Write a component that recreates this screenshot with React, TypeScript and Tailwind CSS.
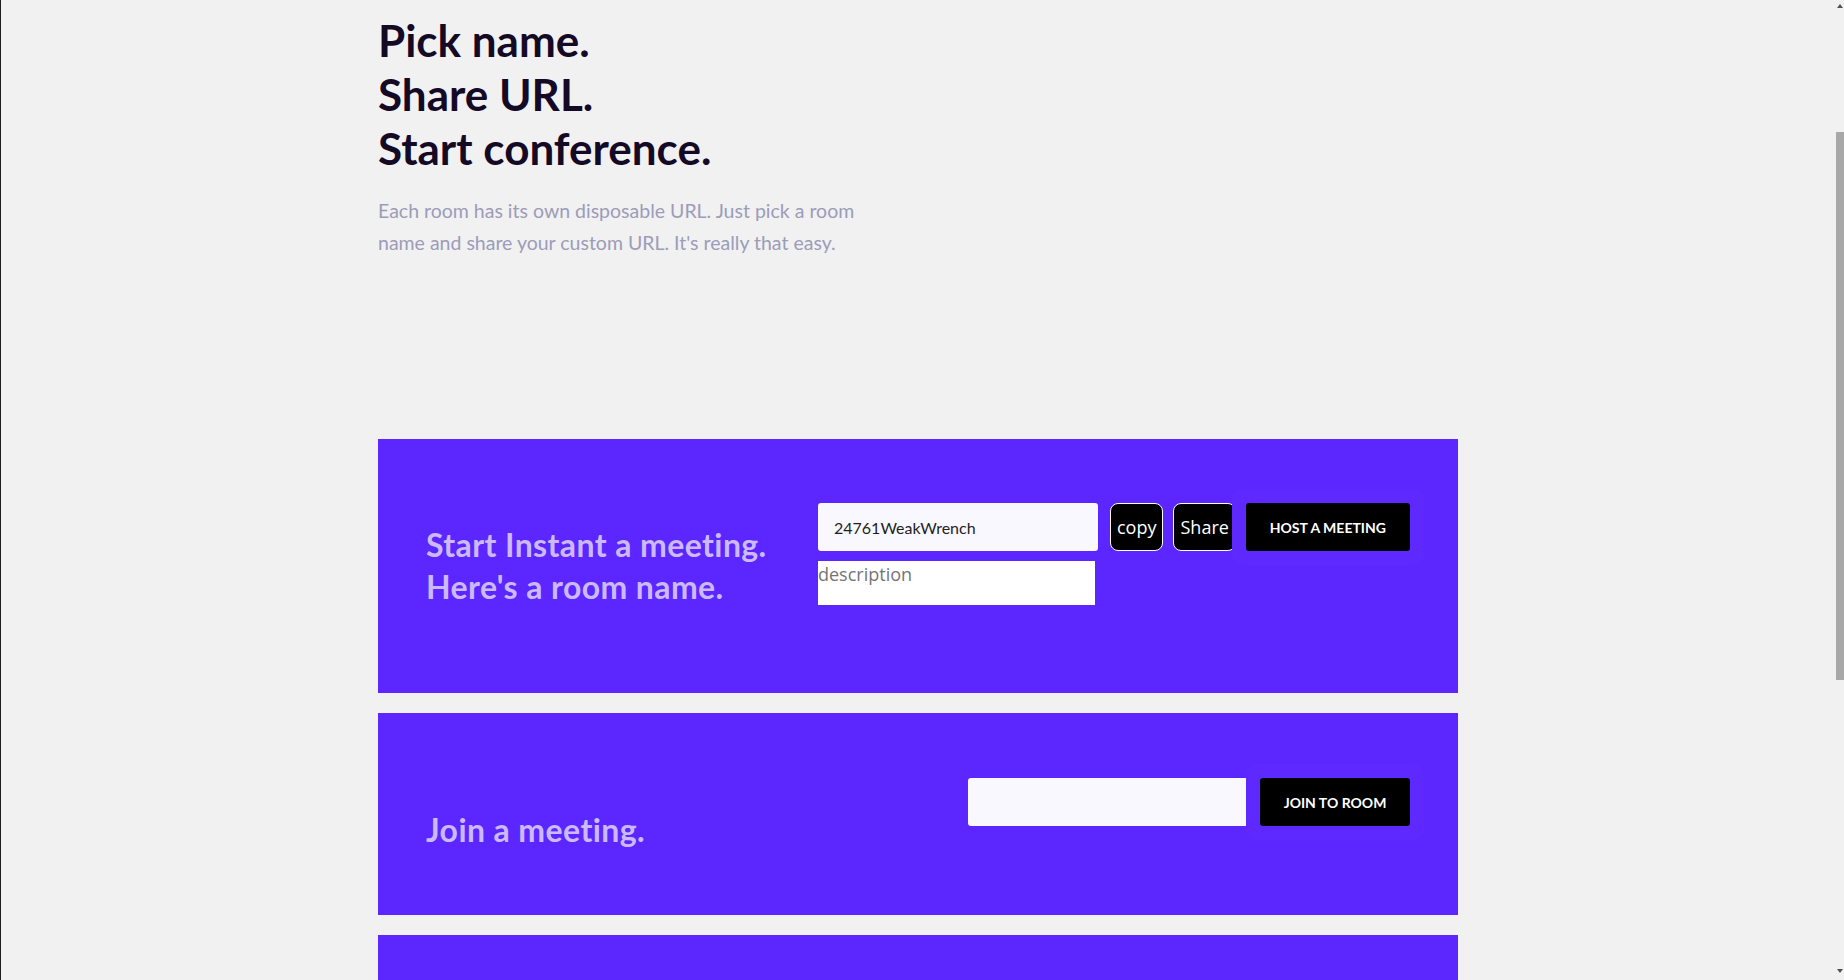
const lato = { fontFamily: '"Lato", "Liberation Sans", sans-serif' };
const openSans = { fontFamily: '"Open Sans", "Noto Sans", sans-serif' };

function Scrollbar() {
  return (
    <div className="flex w-[8px] flex-col items-center bg-[#f1f1f1]">
      <svg width="6" height="4" viewBox="0 0 6 4" className="mt-[4px]">
        <path d="M3 0 L6 4 L0 4 Z" fill="#505050" />
      </svg>
      <div className="mt-[124px] h-[548px] w-[8px] bg-[#a8a8a8]" />
      <div className="flex-1" />
      <svg width="6" height="4" viewBox="0 0 6 4" className="mb-[7px]">
        <path d="M0 0 L6 0 L3 4 Z" fill="#505050" />
      </svg>
    </div>
  );
}

function HostPanel() {
  return (
    <section className="flex h-[254px] bg-[#5b26ff] pl-12 pr-[46px]">
      <div className="w-[392px] shrink-0 pt-[85px]">
        <h2 className="text-[32px] font-bold leading-[42px] tracking-[0.4px] text-[#cbbaff]">
          Start Instant a meeting.
          <br />
          Here's a room name.
        </h2>
      </div>
      <div className="flex flex-col gap-[10px] pt-[64px]">
        <div className="flex items-center">
          <input
            defaultValue="24761WeakWrench"
            className="h-12 w-[280px] shrink-0 rounded-[3px] bg-[#f9f8ff] px-4 text-[16px] text-[#1e1e1e] outline-none"
          />
          <button
            className="ml-[12px] h-12 shrink-0 rounded-[8px] border border-white bg-black px-[6px] text-[18px] text-white"
            style={openSans}
          >
            copy
          </button>
          <button
            className="ml-[10px] h-12 shrink-0 rounded-[8px] border border-white bg-black px-[6px] text-[18px] text-white"
            style={openSans}
          >
            Share
          </button>
          <button className="ml-[10px] h-12 w-[164px] shrink-0 rounded-[3px] bg-black text-[14px] font-bold uppercase text-white shadow-[0_0_0_14px_#5e29ff]">
            Host a meeting
          </button>
        </div>
        <textarea
          placeholder="description"
          className="h-[44px] w-[277px] resize-none bg-white p-0 text-[18px] text-[#222] outline-none placeholder:text-[#757575]"
          style={openSans}
        />
      </div>
    </section>
  );
}

function JoinPanel() {
  return (
    <section className="mt-5 flex h-[202px] justify-between bg-[#5b26ff] pl-12 pr-12">
      <div className="pt-[96px]">
        <h2 className="text-[32px] font-bold leading-[42px] tracking-[0.4px] text-[#cbbaff]">
          Join a meeting.
        </h2>
      </div>
      <div className="flex items-start pt-[65px]">
        <input className="h-12 w-[280px] shrink-0 rounded-[3px] bg-[#f9f8ff] px-4 text-[16px] outline-none" />
        <button className="ml-[12px] h-12 w-[150px] shrink-0 rounded-[3px] bg-black text-[14px] font-bold uppercase text-white shadow-[0_0_0_14px_#5e29ff]">
          Join to room
        </button>
      </div>
    </section>
  );
}

export default function App() {
  return (
    <div
      className="flex h-[980px] w-full overflow-hidden bg-[#f1f1f1] shadow-[inset_1px_0_0_#1e1e1e]"
      style={lato}
    >
      <main className="flex-1 overflow-hidden">
        <div className="mx-auto w-[1080px] pt-[13px]">
          <h1 className="text-[44px] font-bold leading-[54px] text-[#150a26]">
            Pick name.
            <br />
            Share URL.
            <br />
            Start conference.
          </h1>
          <p className="mt-[20px] w-[500px] text-[19.5px] leading-[32px] text-[#9c9cb9]">
            Each room has its own disposable URL. Just pick a room name and
            share your custom URL. It's really that easy.
          </p>
          <div className="mt-[180px]">
            <HostPanel />
            <JoinPanel />
            <section className="mt-5 h-[200px] bg-[#5b26ff]" />
          </div>
        </div>
      </main>
      <Scrollbar />
    </div>
  );
}
